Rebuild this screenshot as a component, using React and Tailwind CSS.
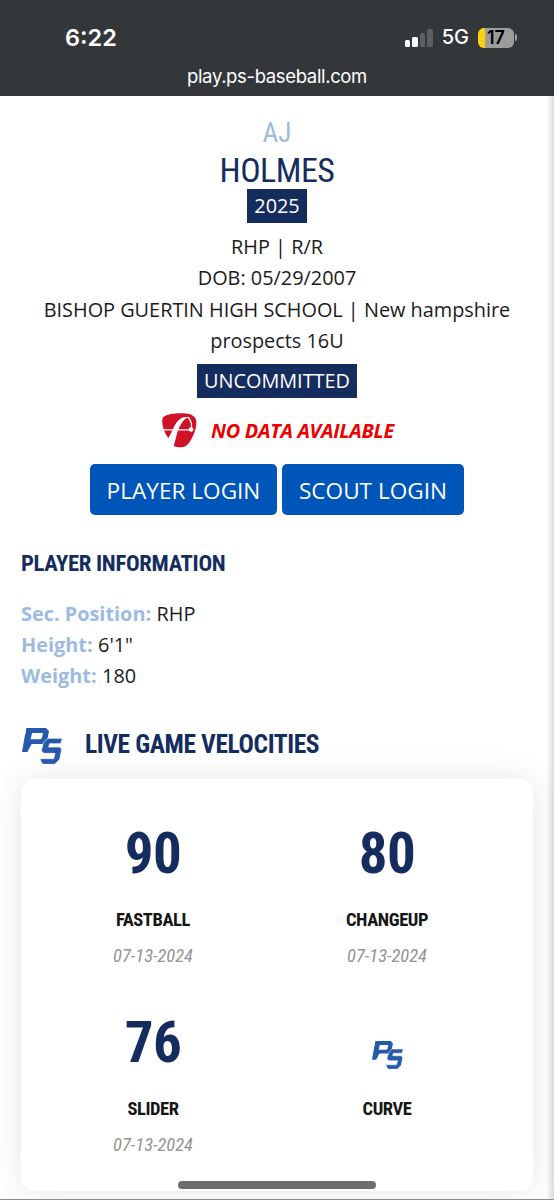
const INFO = [
  { label: 'Sec. Position:', value: 'RHP' },
  { label: 'Height:', value: '6\'1"' },
  { label: 'Weight:', value: '180' },
];

const PITCHES = [
  { name: 'FASTBALL', velo: 90, date: '07-13-2024' },
  { name: 'CHANGEUP', velo: 80, date: '07-13-2024' },
  { name: 'SLIDER', velo: 76, date: '07-13-2024' },
  { name: 'CURVE' },
];

function PSLogo({ className }) {
  return (
    <svg viewBox="0 0 120 108" className={className} fill="none">
      <path
        fill="#2459ab"
        fillRule="evenodd"
        d="M13 0H72L81 9L76 36L64 48H29L16 72H0L9 20L11 16ZM30 15L26 34H56L60 30L63 15Z"
      />
      <path
        fill="#2459ab"
        stroke="#fff"
        strokeWidth="2"
        d="M77 31H121L116 47H83L80 57H113L119 64L113 94L98 109H62L53 92H95L99 76H65L58 68L64 45Z"
      />
    </svg>
  );
}

function FlightScopeLogo({ className }) {
  return (
    <svg viewBox="0 0 106 104" className={className} fill="none">
      <path
        fill="#cf1227"
        d="M3 12C16 3 34 0 58 0C80 0 94 4 101 15C109 29 101 58 88 80C78 98 68 104 52 103C38 102 34 98 33 92C26 88 20 78 17 72C6 56 -4 28 3 12Z"
      />
      <path
        fill="#fff"
        d="M84 12C54 6 42 28 32 50C27 62 22 72 15 80L32 106C43 84 43 54 58 32C65 20 72 13 84 12Z"
      />
      <path stroke="#fff" strokeWidth="4" d="M0 50H88M78 11C87 20 91 34 89 47" />
      <circle cx="88" cy="49" r="7" fill="#fff" />
    </svg>
  );
}

function StatusBar() {
  return (
    <header className="h-24 bg-[#34373a] font-['Inter',sans-serif] text-white">
      <div className="flex h-[60px] items-end justify-between pr-[37px] pl-[65px]">
        <span className="text-[23.5px] leading-[45px] font-semibold">6:22</span>
        <div className="flex h-[45px] items-center">
          <div className="flex h-[18px] items-end gap-[2px]">
            <span className="h-[7px] w-[5.5px] rounded-[1.5px] bg-white" />
            <span className="h-[10px] w-[5.5px] rounded-[1.5px] bg-white" />
            <span className="h-[14px] w-[5.5px] rounded-[1.5px] bg-[#5c5e60]" />
            <span className="h-[18px] w-[5.5px] rounded-[1.5px] bg-[#5c5e60]" />
          </div>
          <span className="ml-[9px] pt-px text-[20px] font-medium">5G</span>
          <div className="ml-[9px] flex h-5 w-9 items-center justify-center rounded-md bg-linear-to-r from-[#fcd20a] from-[6.5px] to-[#9b9c9e] to-[6.5px] text-[18px] font-semibold text-black">
            17
          </div>
          <span className="ml-[1px] h-[7px] w-[2px] rounded-r bg-[#9b9c9e]" />
        </div>
      </div>
      <div className="text-center text-[18.5px] leading-8 tracking-[-0.35px]">play.ps-baseball.com</div>
    </header>
  );
}

function Pitch({ name, velo, date }) {
  return (
    <div className="h-[189px] text-center font-['Roboto_Condensed','Roboto',sans-serif] font-stretch-condensed">
      <div className="flex h-[100px] items-center justify-center text-[57px] leading-none font-bold tracking-[-0.5px] text-[#152c5f]">
        {velo ?? <PSLogo className="mt-[25px] h-7 w-[31px]" />}
      </div>
      <div className="h-[35px] text-[18.5px] leading-[35.5px] font-bold tracking-[-0.4px] text-[#151515]">{name}</div>
      {date && <div className="text-[18.5px] leading-9 text-[#949494] italic">{date}</div>}
    </div>
  );
}

export default function App() {
  return (
    <div className="relative h-[1200px] w-[554px] overflow-hidden border-b border-[#8c8c8c] bg-white font-['Open_Sans',sans-serif] text-[19.88px] leading-[31.3px] text-[#1b1b1b]">
      <StatusBar />

      <section className="flex flex-col items-center pt-[19px] text-center">
        <h1 className="font-['Roboto_Condensed','Roboto',sans-serif] font-stretch-condensed">
          <span className="block h-[34px] text-[27.3px] leading-[36px] text-[#9cbbe3]">AJ</span>
          <span className="block h-10 text-[34px] leading-[42px] tracking-[-0.5px] text-[#152c5f]">HOLMES</span>
        </h1>
        <span className="h-[34px] bg-[#152c5f] px-[7px] leading-[34px] text-white">2025</span>
        <div className="mt-2 w-[500px]">
          <p>RHP | R/R</p>
          <p>DOB: 05/29/2007</p>
          <p>BISHOP GUERTIN HIGH SCHOOL | New hampshire prospects 16U</p>
        </div>
        <span className="mt-[7.8px] h-[34px] bg-[#152c5f] px-[7px] leading-[34px] text-white">UNCOMMITTED</span>
        <div className="mt-4 ml-[2px] flex h-[34px] items-center gap-[14px]">
          <FlightScopeLogo className="h-[35px] w-[35px]" />
          <span className="pb-[1px] font-bold tracking-[-0.3px] text-[#ec0000] italic">NO DATA AVAILABLE</span>
        </div>
        <div className="mt-4 flex gap-[5px] text-[22.6px] text-white">
          <button className="h-[51px] w-[187px] rounded-[5px] bg-[#0055b8] pt-[2px]">PLAYER LOGIN</button>
          <button className="h-[51px] w-[182px] rounded-[5px] bg-[#0055b8] pt-[2px]">SCOUT LOGIN</button>
        </div>
      </section>

      <section className="px-[21px] pt-[33px]">
        <h2 className="font-['Roboto_Condensed','Roboto',sans-serif] text-[22.7px] font-bold tracking-[-0.3px] text-[#152c5f] font-stretch-condensed">
          PLAYER INFORMATION
        </h2>
        <dl className="mt-[18.6px]">
          {INFO.map((item) => (
            <div key={item.label} className="flex gap-[5.5px]">
              <dt className="font-bold text-[#9cbbe3]">{item.label}</dt>
              <dd>{item.value}</dd>
            </div>
          ))}
        </dl>
      </section>

      <section className="px-[21px] pt-[36.4px]">
        <div className="flex h-[36px] items-center gap-[22px]">
          <PSLogo className="h-[36px] w-[42px]" />
          <h2 className="pb-[3px] font-['Roboto_Condensed','Roboto',sans-serif] text-[25.5px] font-bold tracking-[-0.4px] text-[#152c5f] font-stretch-condensed">
            LIVE GAME VELOCITIES
          </h2>
        </div>
        <div className="mt-[15px] grid h-[412px] grid-cols-2 content-start rounded-[14px] bg-white pt-[24px] pr-[29px] pl-[15px] shadow-[0_0_34px_rgba(40,10,20,0.1)]">
          {PITCHES.map((pitch) => (
            <Pitch key={pitch.name} {...pitch} />
          ))}
        </div>
      </section>

      {/* page edge shadow */}
      <div className="absolute top-24 right-0 bottom-0 w-[8px] bg-linear-to-l from-black/14 to-transparent" />
      {/* home indicator */}
      <div className="absolute bottom-[10px] left-[178px] h-[8px] w-[198px] rounded-full bg-[#6d6d6d]" />
    </div>
  );
}
